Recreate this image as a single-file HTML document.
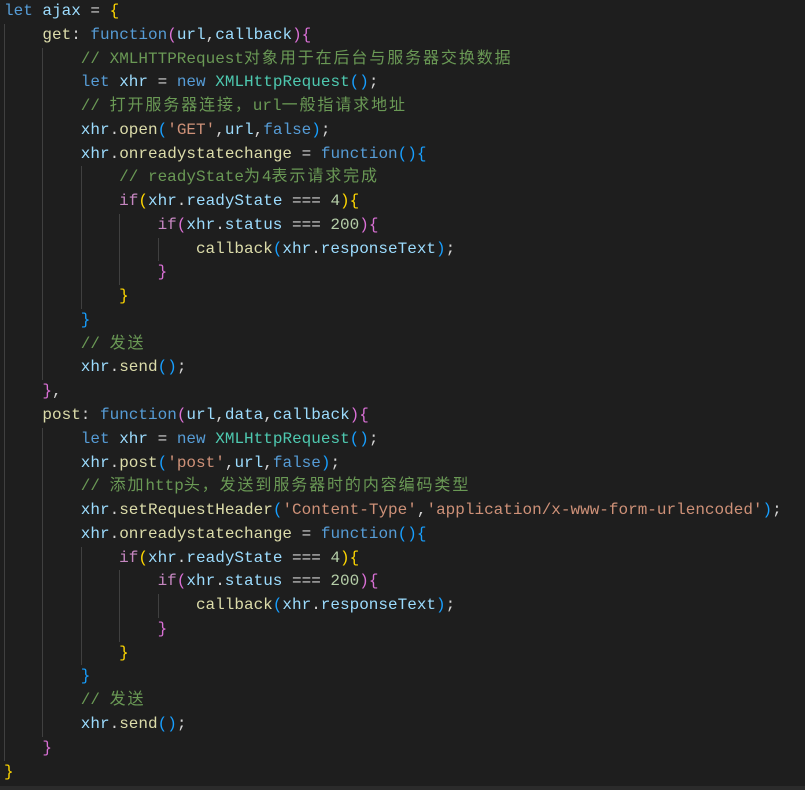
<!DOCTYPE html>
<html><head><meta charset="utf-8"><style>
html,body{margin:0;padding:0;background:#1e1e1e;width:805px;height:790px;overflow:hidden}
.code{position:absolute;left:4px;top:0;font-family:"Liberation Mono","Noto Sans CJK SC",monospace;font-size:16px;line-height:23.78px;color:#d4d4d4}
.l{height:23.78px;white-space:pre;overflow:hidden}
.i{display:inline-block;width:38.4px;height:23.78px;vertical-align:top;box-shadow:inset 1px 0 0 #404040}
.c{color:#6a9955}.k{color:#569cd6}.v{color:#9cdcfe}.f{color:#dcdcaa}.s{color:#ce9178}.n{color:#b5cea8}.t{color:#4ec9b0}.p{color:#c586c0}
.b1{color:#ffd700}.b2{color:#da70d6}.b3{color:#179fff}
.z{font-family:"Noto Sans CJK SC",sans-serif;letter-spacing:1.9px;line-height:0}
.bot{position:absolute;left:0;top:786px;width:805px;height:4px;background:#2b2b2b}
</style></head><body>
<div class="code">
<div class="l"><span class="k">let</span> <span class="v">ajax</span> = <span class="b1">{</span></div>
<div class="l"><span class="i"></span><span class="f">get</span>: <span class="k">function</span><span class="b2">(</span><span class="v">url</span>,<span class="v">callback</span><span class="b2">){</span></div>
<div class="l"><span class="i"></span><span class="i"></span><span class="c">// XMLHTTPRequest<span class="z">对象用于在后台与服务器交换数据</span></span></div>
<div class="l"><span class="i"></span><span class="i"></span><span class="k">let</span> <span class="v">xhr</span> = <span class="k">new</span> <span class="t">XMLHttpRequest</span><span class="b3">()</span>;</div>
<div class="l"><span class="i"></span><span class="i"></span><span class="c">// <span class="z">打开服务器连接，</span>url<span class="z">一般指请求地址</span></span></div>
<div class="l"><span class="i"></span><span class="i"></span><span class="v">xhr</span>.<span class="f">open</span><span class="b3">(</span><span class="s">'GET'</span>,<span class="v">url</span>,<span class="k">false</span><span class="b3">)</span>;</div>
<div class="l"><span class="i"></span><span class="i"></span><span class="v">xhr</span>.<span class="f">onreadystatechange</span> = <span class="k">function</span><span class="b3">(){</span></div>
<div class="l"><span class="i"></span><span class="i"></span><span class="i"></span><span class="c">// readyState<span class="z">为</span>4<span class="z">表示请求完成</span></span></div>
<div class="l"><span class="i"></span><span class="i"></span><span class="i"></span><span class="p">if</span><span class="b1">(</span><span class="v">xhr</span>.<span class="v">readyState</span> === <span class="n">4</span><span class="b1">){</span></div>
<div class="l"><span class="i"></span><span class="i"></span><span class="i"></span><span class="i"></span><span class="p">if</span><span class="b2">(</span><span class="v">xhr</span>.<span class="v">status</span> === <span class="n">200</span><span class="b2">){</span></div>
<div class="l"><span class="i"></span><span class="i"></span><span class="i"></span><span class="i"></span><span class="i"></span><span class="f">callback</span><span class="b3">(</span><span class="v">xhr</span>.<span class="v">responseText</span><span class="b3">)</span>;</div>
<div class="l"><span class="i"></span><span class="i"></span><span class="i"></span><span class="i"></span><span class="b2">}</span></div>
<div class="l"><span class="i"></span><span class="i"></span><span class="i"></span><span class="b1">}</span></div>
<div class="l"><span class="i"></span><span class="i"></span><span class="b3">}</span></div>
<div class="l"><span class="i"></span><span class="i"></span><span class="c">// <span class="z">发送</span></span></div>
<div class="l"><span class="i"></span><span class="i"></span><span class="v">xhr</span>.<span class="f">send</span><span class="b3">()</span>;</div>
<div class="l"><span class="i"></span><span class="b2">}</span>,</div>
<div class="l"><span class="i"></span><span class="f">post</span>: <span class="k">function</span><span class="b2">(</span><span class="v">url</span>,<span class="v">data</span>,<span class="v">callback</span><span class="b2">){</span></div>
<div class="l"><span class="i"></span><span class="i"></span><span class="k">let</span> <span class="v">xhr</span> = <span class="k">new</span> <span class="t">XMLHttpRequest</span><span class="b3">()</span>;</div>
<div class="l"><span class="i"></span><span class="i"></span><span class="v">xhr</span>.<span class="f">post</span><span class="b3">(</span><span class="s">'post'</span>,<span class="v">url</span>,<span class="k">false</span><span class="b3">)</span>;</div>
<div class="l"><span class="i"></span><span class="i"></span><span class="c">// <span class="z">添加</span>http<span class="z">头，发送到服务器时的内容编码类型</span></span></div>
<div class="l"><span class="i"></span><span class="i"></span><span class="v">xhr</span>.<span class="f">setRequestHeader</span><span class="b3">(</span><span class="s">'Content-Type'</span>,<span class="s">'application/x-www-form-urlencoded'</span><span class="b3">)</span>;</div>
<div class="l"><span class="i"></span><span class="i"></span><span class="v">xhr</span>.<span class="f">onreadystatechange</span> = <span class="k">function</span><span class="b3">(){</span></div>
<div class="l"><span class="i"></span><span class="i"></span><span class="i"></span><span class="p">if</span><span class="b1">(</span><span class="v">xhr</span>.<span class="v">readyState</span> === <span class="n">4</span><span class="b1">){</span></div>
<div class="l"><span class="i"></span><span class="i"></span><span class="i"></span><span class="i"></span><span class="p">if</span><span class="b2">(</span><span class="v">xhr</span>.<span class="v">status</span> === <span class="n">200</span><span class="b2">){</span></div>
<div class="l"><span class="i"></span><span class="i"></span><span class="i"></span><span class="i"></span><span class="i"></span><span class="f">callback</span><span class="b3">(</span><span class="v">xhr</span>.<span class="v">responseText</span><span class="b3">)</span>;</div>
<div class="l"><span class="i"></span><span class="i"></span><span class="i"></span><span class="i"></span><span class="b2">}</span></div>
<div class="l"><span class="i"></span><span class="i"></span><span class="i"></span><span class="b1">}</span></div>
<div class="l"><span class="i"></span><span class="i"></span><span class="b3">}</span></div>
<div class="l"><span class="i"></span><span class="i"></span><span class="c">// <span class="z">发送</span></span></div>
<div class="l"><span class="i"></span><span class="i"></span><span class="v">xhr</span>.<span class="f">send</span><span class="b3">()</span>;</div>
<div class="l"><span class="i"></span><span class="b2">}</span></div>
<div class="l"><span class="b1">}</span></div>
</div>
<div class="bot"></div>
</body></html>
